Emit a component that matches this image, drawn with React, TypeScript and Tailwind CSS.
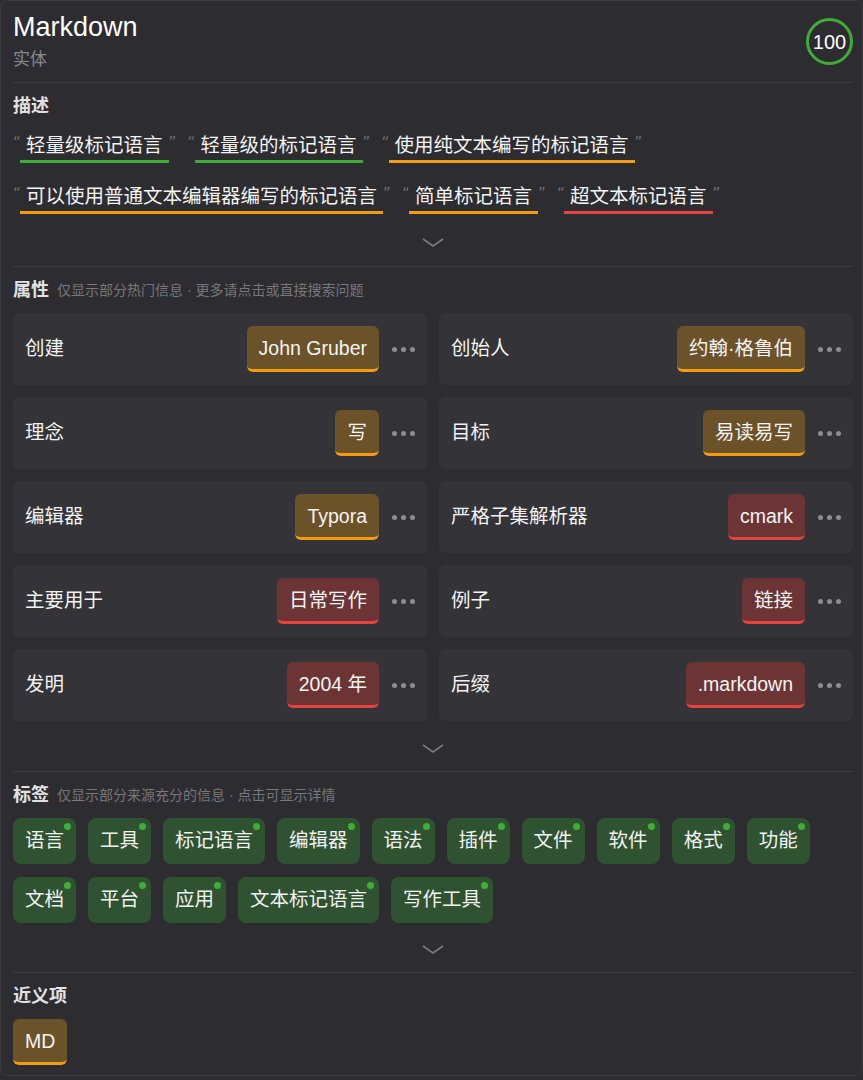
import React from "react";

type Tone = "green" | "orange" | "red";

const underline: Record<Tone, string> = {
  green: "bg-[#3dad35]",
  orange: "bg-[#f39c12]",
  red: "bg-[#e5433f]",
};

const descriptions: { text: string; tone: Tone }[] = [
  { text: "轻量级标记语言", tone: "green" },
  { text: "轻量级的标记语言", tone: "green" },
  { text: "使用纯文本编写的标记语言", tone: "orange" },
  { text: "可以使用普通文本编辑器编写的标记语言", tone: "orange" },
  { text: "简单标记语言", tone: "orange" },
  { text: "超文本标记语言", tone: "red" },
];

const props: { label: string; value: string; red?: boolean }[] = [
  { label: "创建", value: "John Gruber" },
  { label: "创始人", value: "约翰·格鲁伯" },
  { label: "理念", value: "写" },
  { label: "目标", value: "易读易写" },
  { label: "编辑器", value: "Typora" },
  { label: "严格子集解析器", value: "cmark", red: true },
  { label: "主要用于", value: "日常写作", red: true },
  { label: "例子", value: "链接", red: true },
  { label: "发明", value: "2004 年", red: true },
  { label: "后缀", value: ".markdown", red: true },
];

const tags = [
  "语言",
  "工具",
  "标记语言",
  "编辑器",
  "语法",
  "插件",
  "文件",
  "软件",
  "格式",
  "功能",
  "文档",
  "平台",
  "应用",
  "文本标记语言",
  "写作工具",
];

const Chevron = ({ className }: { className: string }) => (
  <div className={`flex justify-center ${className}`}>
    <svg width="22" height="10" viewBox="0 0 22 10" fill="none">
      <path d="M1 1 L11 8 L21 1" stroke="#7a7a7f" strokeWidth="1.6" />
    </svg>
  </div>
);

const Divider = () => <div className="h-px bg-[#3d3d42]" />;

const Heading = ({ title, note }: { title: string; note?: string }) => (
  <div className="flex items-center gap-2 mt-[11px] mb-[11px] h-[24px]">
    <span className="text-[18px] font-bold text-[#e2e2e4]">{title}</span>
    {note && <span className="text-[14px] text-[#77777c]">{note}</span>}
  </div>
);

const Pill = ({ value, red }: { value: string; red?: boolean }) => (
  <div
    className={`h-[46px] px-3 pt-[2px] flex items-center rounded-md border-b-[3px] text-[19.5px] text-[#f4f4f4] ${
      red ? "bg-[#6c3434] border-[#e5433f]" : "bg-[#6b5229] border-[#f39c12]"
    }`}
  >
    {value}
  </div>
);

const Dots = () => (
  <div className="flex gap-[4px] ml-[13px]">
    <span className="w-[5px] h-[5px] rounded-full bg-[#8e8e93]" />
    <span className="w-[5px] h-[5px] rounded-full bg-[#8e8e93]" />
    <span className="w-[5px] h-[5px] rounded-full bg-[#8e8e93]" />
  </div>
);

const Quote = ({ mark }: { mark: string }) => (
  <span
    className="w-[7px] text-[15px] leading-[14px] mt-[4px] text-[#6f6f74] text-center"
    style={{ fontFamily: '"DejaVu Sans", sans-serif' }}
  >
    {mark}
  </span>
);

export default function App() {
  return (
    <div
      className="min-h-screen bg-[#2c2c31] text-[#f2f2f2]"
      style={{ fontFamily: '"Liberation Sans", "Noto Sans CJK SC", sans-serif' }}
    >
      <div className="border border-[#3a3a3f] rounded-lg pl-[12px] pr-[9px] pt-[10px] pb-[10px]">
        {/* header */}
        <div className="flex justify-between items-start">
          <div>
            <div className="text-[27px] leading-[32px] text-white">Markdown</div>
            <div className="text-[17px] leading-[22px] mt-[6px] text-[#8a8a8e]">实体</div>
          </div>
          <div className="mt-[7px] w-[47px] h-[47px] rounded-full border-[3px] border-[#3dad35] flex items-center justify-center text-[20px] text-white">
            100
          </div>
        </div>
        <div className="mt-[11px]">
          <Divider />
        </div>

        {/* descriptions */}
        <Heading title="描述" />
        <div className="flex flex-wrap gap-x-[12px] gap-y-[20px] mt-[14px]">
          {descriptions.map((d) => (
            <div key={d.text} className="flex items-start">
              <Quote mark="“" />
              <div className="flex flex-col">
                <span className="px-[6px] text-[19.5px] leading-[26px] text-[#f4f4f4]">{d.text}</span>
                <span className={`h-[3px] mt-[2px] ${underline[d.tone]}`} />
              </div>
              <Quote mark="”" />
            </div>
          ))}
        </div>
        <Chevron className="pt-[24px] pb-[18px]" />
        <Divider />

        {/* properties */}
        <Heading title="属性" note="仅显示部分热门信息 · 更多请点击或直接搜索问题" />
        <div className="grid grid-cols-2 gap-[12px]">
          {props.map((p) => (
            <div
              key={p.label}
              className="h-[72px] bg-[#333338] rounded-md pl-[12px] pr-[12px] flex items-center justify-between"
            >
              <span className="text-[19.5px] text-[#f2f2f2]">{p.label}</span>
              <div className="flex items-center">
                <Pill value={p.value} red={p.red} />
                <Dots />
              </div>
            </div>
          ))}
        </div>
        <Chevron className="pt-[23px] pb-[17px]" />
        <Divider />

        {/* tags */}
        <Heading title="标签" note="仅显示部分来源充分的信息 · 点击可显示详情" />
        <div className="flex flex-wrap gap-x-[12px] gap-y-[13px]">
          {tags.map((t) => (
            <div
              key={t}
              className="relative h-[46px] px-[12px] flex items-center rounded-lg bg-[#2f5231] text-[19.5px] text-[#f2f2f2]"
            >
              {t}
              <span className="absolute top-[5px] right-[5px] w-[7px] h-[7px] rounded-full bg-[#3fae35]" />
            </div>
          ))}
        </div>
        <Chevron className="pt-[22px] pb-[17px]" />
        <Divider />

        {/* synonyms */}
        <Heading title="近义项" />
        <div className="flex">
          <Pill value="MD" />
        </div>
      </div>
    </div>
  );
}
